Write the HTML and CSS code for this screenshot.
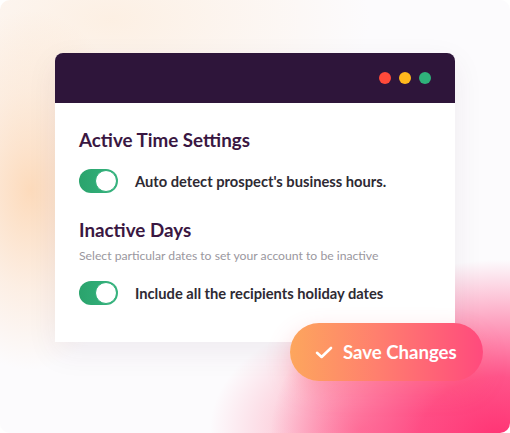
FILE: index.html
```html
<!DOCTYPE html>
<html lang="en">
<head>
    <meta charset="UTF-8">
    <meta name="viewport" content="width=device-width, initial-scale=1.0">
    <title>Active Time Settings</title>
    <link rel="stylesheet" href="styles.css">
</head>
<body>
    <div class="stage">
        <div class="window">
            <div class="titlebar">
                <span class="dot red"></span>
                <span class="dot yellow"></span>
                <span class="dot green"></span>
            </div>
            <div class="content">
                <h2>Active Time Settings</h2>
                <div class="option first">
                    <span class="toggle"><span class="knob"></span></span>
                    <span class="label">Auto detect prospect's business hours.</span>
                </div>

                <h2 class="second">Inactive Days</h2>
                <p class="hint">Select particular dates to set your account to be inactive</p>
                <div class="option">
                    <span class="toggle"><span class="knob"></span></span>
                    <span class="label">Include all the recipients holiday dates</span>
                </div>
            </div>
        </div>

        <button class="save">
            <svg width="18" height="13" viewBox="0 0 18 13">
                <path d="M2 6.8 L6.6 11 L16 2" fill="none" stroke="#fff" stroke-width="2.6" stroke-linecap="round" stroke-linejoin="round"/>
            </svg>
            Save Changes
        </button>
    </div>
</body>
</html>
```

FILE: styles.css
```css
body {
    margin: 0;
    font-family: Lato, "Open Sans", sans-serif;
    background: #fff;
}

.stage {
    width: 510px;
    height: 433px;
    box-sizing: border-box;
    padding: 53px 55px 0;
    position: relative;
    overflow: hidden;
    border-radius: 10px;
    background:
        radial-gradient(ellipse 230px 180px at 500px 440px, rgba(255, 50, 115, 1) 0%, rgba(255, 55, 118, 0.85) 35%, rgba(255, 90, 140, 0) 100%),
        radial-gradient(ellipse 150px 110px at 360px 430px, rgba(255, 90, 130, 0.55) 0%, rgba(255, 120, 150, 0) 100%),
        radial-gradient(ellipse 110px 180px at 30px 190px, rgba(253, 205, 160, 0.7) 0%, rgba(253, 215, 180, 0.35) 55%, rgba(253, 230, 210, 0) 100%),
        radial-gradient(ellipse 260px 140px at 110px 20px, rgba(253, 232, 210, 0.6) 0%, rgba(253, 240, 230, 0) 100%),
        #fcfbfd;
}

.window {
    width: 400px;
    background: #fff;
    border-radius: 8px 8px 0 0;
    box-shadow: 0 10px 30px rgba(80, 40, 80, 0.08);
}

.titlebar {
    height: 50px;
    background: #2e153a;
    border-radius: 8px 8px 0 0;
    display: flex;
    align-items: center;
    justify-content: flex-end;
    gap: 8px;
    padding-right: 24px;
}

.dot {
    width: 12px;
    height: 12px;
    border-radius: 50%;
}

.red { background: #ff4a3a; }
.yellow { background: #ffb91d; }
.green { background: #2fb17a; }

.content {
    padding: 26px 24px 37px;
}

h2 {
    margin: 0;
    font-size: 18.8px;
    line-height: 22px;
    font-weight: 700;
    color: #3a1742;
}

h2.second {
    margin-top: 26px;
}

.option {
    display: flex;
    align-items: center;
    gap: 17px;
    margin-top: 17px;
}

.option.first {
    margin-top: 18px;
}

.toggle {
    width: 39px;
    height: 24px;
    border-radius: 12px;
    background: linear-gradient(90deg, #2aa36c, #36b47f);
    display: flex;
    justify-content: flex-end;
    align-items: center;
    box-sizing: border-box;
    padding-right: 1px;
}

.knob {
    width: 22px;
    height: 22px;
    box-sizing: border-box;
    border-radius: 50%;
    background: #fff;
    border: 1.5px solid #2fae78;
}

.label {
    font-size: 14.7px;
    font-weight: 700;
    color: #2e2a33;
}

.hint {
    margin: 7px 0 0;
    font-size: 12.2px;
    line-height: 16px;
    color: #9a979e;
}

.save {
    position: absolute;
    left: 290px;
    top: 323px;
    width: 193px;
    height: 58px;
    border: none;
    border-radius: 29px;
    background: linear-gradient(90deg, #fda65d 0%, #ff7f6e 45%, #ff4a7d 100%);
    color: #fff;
    font-family: Lato, "Open Sans", sans-serif;
    font-size: 18.6px;
    font-weight: 700;
    display: flex;
    align-items: center;
    gap: 10px;
    padding: 0 0 0 25px;
    box-shadow: 0 10px 24px rgba(255, 90, 110, 0.3);
    cursor: pointer;
}
```
